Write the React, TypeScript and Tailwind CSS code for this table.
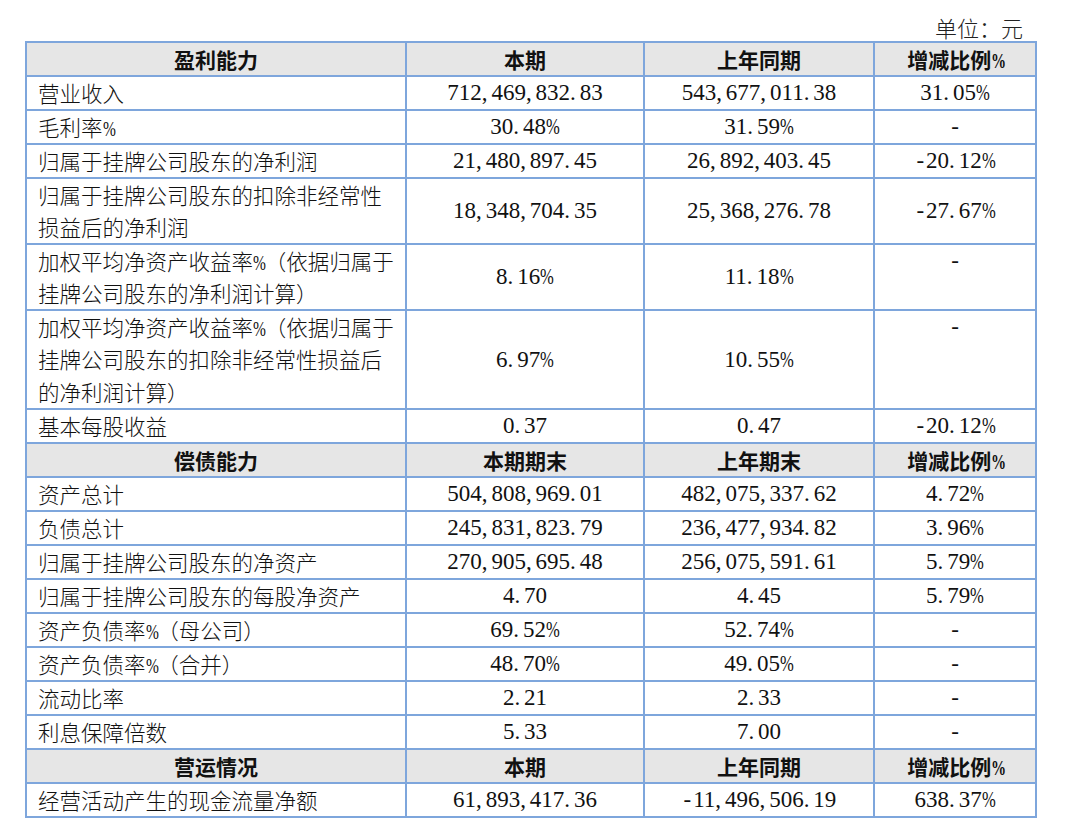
import React from "react";

type Row = {
  label: string[];
  cur: string;
  prev: string;
  ratio: string;
  head?: boolean;
  dashTop?: boolean;
};

const rows: Row[] = [
  { label: ["盈利能力"], cur: "本期", prev: "上年同期", ratio: "增减比例%", head: true },
  { label: ["营业收入"], cur: "712,469,832.83", prev: "543,677,011.38", ratio: "31.05%" },
  { label: ["毛利率%"], cur: "30.48%", prev: "31.59%", ratio: "-" },
  { label: ["归属于挂牌公司股东的净利润"], cur: "21,480,897.45", prev: "26,892,403.45", ratio: "-20.12%" },
  {
    label: ["归属于挂牌公司股东的扣除非经常性", "损益后的净利润"],
    cur: "18,348,704.35",
    prev: "25,368,276.78",
    ratio: "-27.67%",
  },
  {
    label: ["加权平均净资产收益率%（依据归属于", "挂牌公司股东的净利润计算）"],
    cur: "8.16%",
    prev: "11.18%",
    ratio: "-",
    dashTop: true,
  },
  {
    label: ["加权平均净资产收益率%（依据归属于", "挂牌公司股东的扣除非经常性损益后", "的净利润计算）"],
    cur: "6.97%",
    prev: "10.55%",
    ratio: "-",
    dashTop: true,
  },
  { label: ["基本每股收益"], cur: "0.37", prev: "0.47", ratio: "-20.12%" },
  { label: ["偿债能力"], cur: "本期期末", prev: "上年期末", ratio: "增减比例%", head: true },
  { label: ["资产总计"], cur: "504,808,969.01", prev: "482,075,337.62", ratio: "4.72%" },
  { label: ["负债总计"], cur: "245,831,823.79", prev: "236,477,934.82", ratio: "3.96%" },
  { label: ["归属于挂牌公司股东的净资产"], cur: "270,905,695.48", prev: "256,075,591.61", ratio: "5.79%" },
  { label: ["归属于挂牌公司股东的每股净资产"], cur: "4.70", prev: "4.45", ratio: "5.79%" },
  { label: ["资产负债率%（母公司）"], cur: "69.52%", prev: "52.74%", ratio: "-" },
  { label: ["资产负债率%（合并）"], cur: "48.70%", prev: "49.05%", ratio: "-" },
  { label: ["流动比率"], cur: "2.21", prev: "2.33", ratio: "-" },
  { label: ["利息保障倍数"], cur: "5.33", prev: "7.00", ratio: "-" },
  { label: ["营运情况"], cur: "本期", prev: "上年同期", ratio: "增减比例%", head: true },
  { label: ["经营活动产生的现金流量净额"], cur: "61,893,417.36", prev: "-11,496,506.19", ratio: "638.37%" },
];

const cjk = "font-['Noto_Sans_CJK_SC',sans-serif]";
const serif = "font-['Liberation_Serif',serif]";

// narrow half-width percent sign, as in the Song face of the source document
function Pct() {
  return <span className={`inline-block w-[0.55em] origin-left scale-x-[0.72] ${serif}`}>%</span>;
}

function Label({ text }: { text: string }) {
  const parts = text.split("%");
  return (
    <>
      {parts.map((p, i) => (
        <React.Fragment key={i}>
          {i > 0 && <Pct />}
          {p}
        </React.Fragment>
      ))}
    </>
  );
}

// half-width figures: punctuation gets its own slot
function Num({ text }: { text: string }) {
  return (
    <div className={`h-[32px] leading-[32px] whitespace-nowrap ${serif}`}>
      {text.split("").map((ch, i) => {
        if (ch === "," || ch === ".") {
          return (
            <span key={i} className="inline-block w-[0.42em] text-left">
              {ch}
            </span>
          );
        }
        if (ch === "-") {
          return (
            <span key={i} className="inline-block w-[0.5em] text-center">
              -
            </span>
          );
        }
        if (ch === "%") {
          return (
            <span key={i} className="inline-block w-[0.6em] origin-left scale-x-[0.72]">
              %
            </span>
          );
        }
        return <span key={i}>{ch}</span>;
      })}
    </div>
  );
}

const cell = "border-2 border-[#7ea6dc] p-0 overflow-hidden";
const numCell = `${cell} text-center text-[23px] leading-[32px] ${serif}`;

export default function App() {
  return (
    <div className="w-[1080px] h-[837px] bg-white text-[#111]">
      <div className="ml-[25px] w-[1010px] pt-[13px]">
        <div className={`h-[28px] pr-[12px] text-right text-[22px] leading-[28px] font-light text-[#222] ${cjk}`}>
          单位：元
        </div>
        <table className="w-full table-fixed border-collapse">
          <colgroup>
            <col className="w-[380px]" />
            <col className="w-[238px]" />
            <col className="w-[230px]" />
            <col className="w-[162px]" />
          </colgroup>
          <tbody>
            {rows.map((r, idx) =>
              r.head ? (
                <tr key={idx} className="bg-[#e6e6e6]">
                  {[r.label[0], r.cur, r.prev, r.ratio].map((t, j) => (
                    <td key={j} className={`${cell} text-center text-[21px] leading-[32px] font-bold ${cjk}`}>
                      <div className="h-[32px] whitespace-nowrap">
                        <Label text={t} />
                      </div>
                    </td>
                  ))}
                </tr>
              ) : (
                <tr key={idx}>
                  <td className={`${cell} pl-[11px] text-[21.5px] leading-[32px] font-light whitespace-nowrap ${cjk}`}>
                    {r.label.map((l, k) => (
                      <div key={k} className={r.label.length === 3 ? "h-[32.4px]" : "h-[32px]"}>
                        <Label text={l} />
                      </div>
                    ))}
                  </td>
                  <td className={`${numCell} align-middle`}>
                    <Num text={r.cur} />
                  </td>
                  <td className={`${numCell} align-middle`}>
                    <Num text={r.prev} />
                  </td>
                  <td className={`${numCell} ${r.dashTop ? "align-top" : "align-middle"}`}>
                    <Num text={r.ratio} />
                  </td>
                </tr>
              )
            )}
          </tbody>
        </table>
      </div>
    </div>
  );
}
